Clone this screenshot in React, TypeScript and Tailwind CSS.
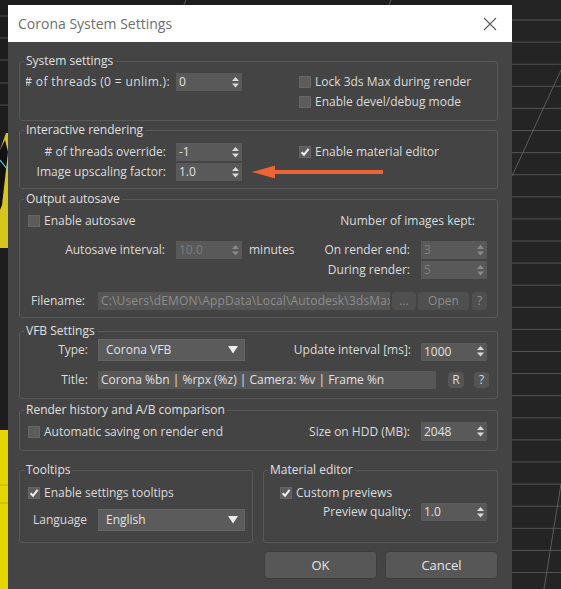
import React from "react";

const TXT = "text-[#dcdcdc]";

function SpinArrows({ dim }: { dim?: boolean }) {
  const c = dim ? "#8a8a8a" : "#dadada";
  return (
    <svg width="7" height="11" viewBox="0 0 7 11" className="shrink-0">
      <polygon points="3.5,0 0,4 7,4" fill={c} />
      <polygon points="0,6.5 7,6.5 3.5,10.5" fill={c} />
    </svg>
  );
}

function Spinner({ value, disabled, h }: { value: string; disabled?: boolean; h?: string }) {
  return (
    <div
      className={
        "w-[66px] flex items-center justify-between pl-[3px] pr-[3px] bg-[#595959] shrink-0 " +
        (h === "19" ? "h-[19px] " : "h-[18px] ") +
        (disabled ? "text-[#7e7e7e]" : "text-[#e2e2e2]")
      }
    >
      <span>{value}</span>
      <SpinArrows dim={disabled} />
    </div>
  );
}

function Dropdown({ value }: { value: string }) {
  return (
    <div className="w-[147px] h-[22px] bg-[#5b5b5b] border border-[#646464] flex items-center justify-between pl-[7px] pr-[6px] text-[#e2e2e2] shrink-0">
      <span>{value}</span>
      <svg width="10" height="8" viewBox="0 0 10 8">
        <polygon points="0,0 10,0 5,7.5" fill="#ececec" />
      </svg>
    </div>
  );
}

function Check({ checked }: { checked?: boolean }) {
  return (
    <span className="w-[12px] h-[12px] bg-[#5c5c5c] border border-[#656565] flex items-center justify-center shrink-0">
      {checked ? (
        <svg width="10" height="10" viewBox="0 0 10 10">
          <path d="M1.6 5.2 L4 7.8 L8.6 1.8" stroke="#f2f2f2" strokeWidth="2" fill="none" />
        </svg>
      ) : null}
    </span>
  );
}

function CheckRow({ checked, label }: { checked?: boolean; label: string }) {
  return (
    <div className="flex items-center">
      <Check checked={checked} />
      <span className="ml-[4px] whitespace-nowrap">{label}</span>
    </div>
  );
}

function Group({ title, className, children }: { title: string; className?: string; children: React.ReactNode }) {
  return (
    <fieldset className={"border border-[#585858] rounded-[3px] min-w-0 " + (className || "")}>
      <legend className="ml-[4px] px-[2px] leading-[16px] text-[#e0e0e0]">{title}</legend>
      {children}
    </fieldset>
  );
}

function Background() {
  const ys: number[] = [];
  for (let k = 0; k < 26; k++) ys.push(20 + k * 22.1);
  return (
    <svg className="absolute inset-0" width="561" height="589" viewBox="0 0 561 589">
      <rect x="0" y="0" width="561" height="589" fill="#1d1d1d" />
      <rect x="512" y="0" width="49" height="589" fill="#242424" />
      {ys.map((y, i) => (
        <line key={i} x1="512" y1={y} x2="561" y2={y} stroke="#535353" strokeWidth="1" />
      ))}
      <line x1="561" y1="70" x2="512" y2="176" stroke="#6a6a6a" strokeWidth="0.8" />
      <line x1="561" y1="484" x2="544" y2="589" stroke="#6a6a6a" strokeWidth="0.8" />
      {[16, 38, 60, 83, 105].map((y, i) => (
        <line key={"l" + i} x1="0" y1={y} x2="8" y2={y} stroke="#4e4e4e" strokeWidth="1" />
      ))}
      <line x1="186" y1="0" x2="184" y2="5" stroke="#6a6a6a" strokeWidth="0.8" />
      <line x1="391" y1="0" x2="389" y2="5" stroke="#6a6a6a" strokeWidth="0.8" />
      <polygon points="0,150 6,133 8,133 8,248 0,248" fill="#d6c61a" />
      <polygon points="0,150 5,140 8,152 2,205 0,210" fill="#111" />
      <line x1="0" y1="160" x2="8" y2="170" stroke="#4fd4e8" strokeWidth="1.2" />
      <rect x="0" y="430" width="8" height="159" fill="#e6d600" />
      <line x1="0" y1="485" x2="8" y2="485" stroke="#bfae00" strokeWidth="1" />
      <line x1="0" y1="503" x2="8" y2="503" stroke="#bfae00" strokeWidth="1" />
    </svg>
  );
}

export default function App() {
  return (
    <div className="relative w-[561px] h-[589px] overflow-hidden font-['Open_Sans',sans-serif] text-[12px] leading-[16px]">
      <Background />
      <div className="relative ml-[8px] pt-[5px] w-[504px]">
        {/* title bar */}
        <div className="h-[37px] bg-white flex items-center justify-between pl-[10px] pr-[15px]">
          <span className="text-[14px] text-[#6e6e6e]">Corona System Settings</span>
          <svg width="14" height="14" viewBox="0 0 14 14">
            <path d="M1 1 L13 13 M13 1 L1 13" stroke="#5a5a5a" strokeWidth="1.1" />
          </svg>
        </div>
        {/* body */}
        <div className={"bg-[#444444] h-[547px] pl-[11px] pr-[14px] pt-[11px] " + TXT}>
          {/* System settings */}
          <Group title="System settings" className="pb-[9px]">
            <div className="flex items-center h-[18px] mt-[4px]">
              <div className="ml-[6px] w-[144px] overflow-hidden flex justify-end whitespace-nowrap">
                <span className="tracking-[0.35px]">#&nbsp;of threads (0 = unlim.):</span>
              </div>
              <div className="ml-[6px]">
                <Spinner value="0" />
              </div>
              <div className="ml-[57px]">
                <CheckRow label="Lock 3ds Max during render" />
              </div>
            </div>
            <div className="flex items-center h-[18px] mt-[2px]">
              <div className="ml-[279px]">
                <CheckRow label="Enable devel/debug mode" />
              </div>
            </div>
          </Group>

          {/* Interactive rendering */}
          <Group title="Interactive rendering" className="mt-[1px] pb-[7px]">
            <div className="flex items-center h-[18px] mt-[5px]">
              <div className="w-[148px] flex justify-end whitespace-nowrap pr-[2px]">
                <span>#&nbsp;of threads override:</span>
              </div>
              <div className="ml-[8px]">
                <Spinner value="-1" />
              </div>
              <div className="ml-[57px]">
                <CheckRow checked label="Enable material editor" />
              </div>
            </div>
            <div className="flex items-center h-[18px] mt-[2px]">
              <div className="w-[148px] flex justify-end whitespace-nowrap pr-[2px]">
                <span>Image upscaling factor:</span>
              </div>
              <div className="ml-[8px]">
                <Spinner value="1.0" />
              </div>
              <svg className="ml-[10px]" width="132" height="14" viewBox="0 0 132 14">
                <rect x="20" y="5" width="111" height="4" fill="#ee6436" />
                <polygon points="0,7 23,0.5 23,13.5" fill="#ee6436" />
              </svg>
            </div>
          </Group>

          {/* Output autosave */}
          <Group title="Output autosave" className="mt-[2px] pb-[7px]">
            <div className="flex items-center h-[18px] mt-[5px] pr-[22px]">
              <div className="ml-[8px]">
                <CheckRow label="Enable autosave" />
              </div>
              <div className="flex-1" />
              <span className="whitespace-nowrap">Number of images kept:</span>
            </div>
            <div className="flex items-center h-[18px] mt-[11px] pr-[10px]">
              <div className="w-[145px] flex justify-end whitespace-nowrap">
                <span>Autosave interval:</span>
              </div>
              <div className="ml-[11px]">
                <Spinner value="10.0" disabled />
              </div>
              <span className="ml-[7px] whitespace-nowrap">minutes</span>
              <div className="flex-1" />
              <span className="whitespace-nowrap">On render end:</span>
              <div className="ml-[11px]">
                <Spinner value="3" disabled />
              </div>
            </div>
            <div className="flex items-center h-[18px] mt-[2px] pr-[10px]">
              <div className="flex-1" />
              <span className="whitespace-nowrap">During render:</span>
              <div className="ml-[11px]">
                <Spinner value="5" disabled />
              </div>
            </div>
            <div className="flex items-center h-[18px] mt-[13px]">
              <div className="w-[78px] pl-[11px] whitespace-nowrap">Filename:</div>
              <div className="w-[292px] h-[18px] bg-[#555555] text-[#8d8d8d] pl-[3px] overflow-hidden whitespace-nowrap flex items-center">
                <span className="tracking-[0.15px]">C:\Users\dEMON\AppData\Local\Autodesk\3dsMax</span>
              </div>
              <div className="ml-[2px] w-[24px] h-[18px] bg-[#4f4f4f] rounded-[3px] text-[#8d8d8d] flex items-center justify-center">
                ...
              </div>
              <div className="ml-[2px] w-[51px] h-[18px] bg-[#4f4f4f] rounded-[3px] text-[#8d8d8d] flex items-center justify-center">
                Open
              </div>
              <div className="ml-[3px] w-[15px] h-[18px] bg-[#4f4f4f] rounded-[3px] text-[#8d8d8d] flex items-center justify-center">
                ?
              </div>
            </div>
          </Group>

          {/* VFB Settings */}
          <Group title="VFB Settings" className="mt-[5px] pb-[9px]">
            <div className="flex items-center h-[22px] pr-[10px]">
              <div className="w-[68px] flex justify-end">Type:</div>
              <div className="ml-[10px]">
                <Dropdown value="Corona VFB" />
              </div>
              <div className="flex-1" />
              <span className="whitespace-nowrap">Update interval [ms]:</span>
              <div className="ml-[10px] mt-[3px]">
                <Spinner value="1000" />
              </div>
            </div>
            <div className="flex items-center h-[18px] mt-[10px]">
              <div className="w-[68px] flex justify-end">Title:</div>
              <div className="ml-[10px] w-[338px] h-[18px] bg-[#575757] text-[#e2e2e2] pl-[3px] flex items-center whitespace-nowrap overflow-hidden">
                Corona %bn | %rpx (%z) | Camera: %v | Frame %n
              </div>
              <div className="ml-[12px] w-[16px] h-[16px] bg-[#555555] rounded-[4px] flex items-center justify-center">R</div>
              <div className="ml-[10px] w-[15px] h-[16px] bg-[#555555] rounded-[4px] flex items-center justify-center">?</div>
            </div>
          </Group>

          {/* Render history */}
          <Group title="Render history and A/B comparison" className="mt-[3px] pb-[9px]">
            <div className="flex items-center h-[19px] mt-[4px] pr-[10px]">
              <div className="ml-[8px]">
                <CheckRow label="Automatic saving on render end" />
              </div>
              <div className="flex-1" />
              <span className="whitespace-nowrap">Size on HDD (MB):</span>
              <div className="ml-[11px]">
                <Spinner value="2048" h="19" />
              </div>
            </div>
          </Group>

          {/* Tooltips / Material editor */}
          <div className="flex mt-[11px]">
            <Group title="Tooltips" className="w-[234px] pb-[11px]">
              <div className="flex items-center h-[18px] mt-[6px]">
                <div className="ml-[8px]">
                  <CheckRow checked label="Enable settings tooltips" />
                </div>
              </div>
              <div className="flex items-center h-[22px] mt-[7px]">
                <div className="w-[78px] pl-[13px]">Language</div>
                <Dropdown value="English" />
              </div>
            </Group>
            <Group title="Material editor" className="w-[235px] ml-[10px]">
              <div className="flex items-center h-[18px] mt-[6px]">
                <div className="ml-[16px]">
                  <CheckRow checked label="Custom previews" />
                </div>
              </div>
              <div className="flex items-center h-[18px] mt-[1px] pr-[10px]">
                <div className="flex-1" />
                <span className="whitespace-nowrap">Preview quality:</span>
                <div className="ml-[10px]">
                  <Spinner value="1.0" />
                </div>
              </div>
            </Group>
          </div>

          {/* Buttons */}
          <div className="flex mt-[8px] ml-[245px]">
            <div className="w-[114px] h-[28px] bg-[#575757] border border-[#3e3e3e] rounded-[4px] flex items-center justify-center text-[13px] text-[#e4e4e4]">
              OK
            </div>
            <div className="ml-[8px] w-[114px] h-[28px] bg-[#575757] border border-[#3e3e3e] rounded-[4px] flex items-center justify-center text-[13px] text-[#e4e4e4]">
              Cancel
            </div>
          </div>
        </div>
      </div>
    </div>
  );
}
